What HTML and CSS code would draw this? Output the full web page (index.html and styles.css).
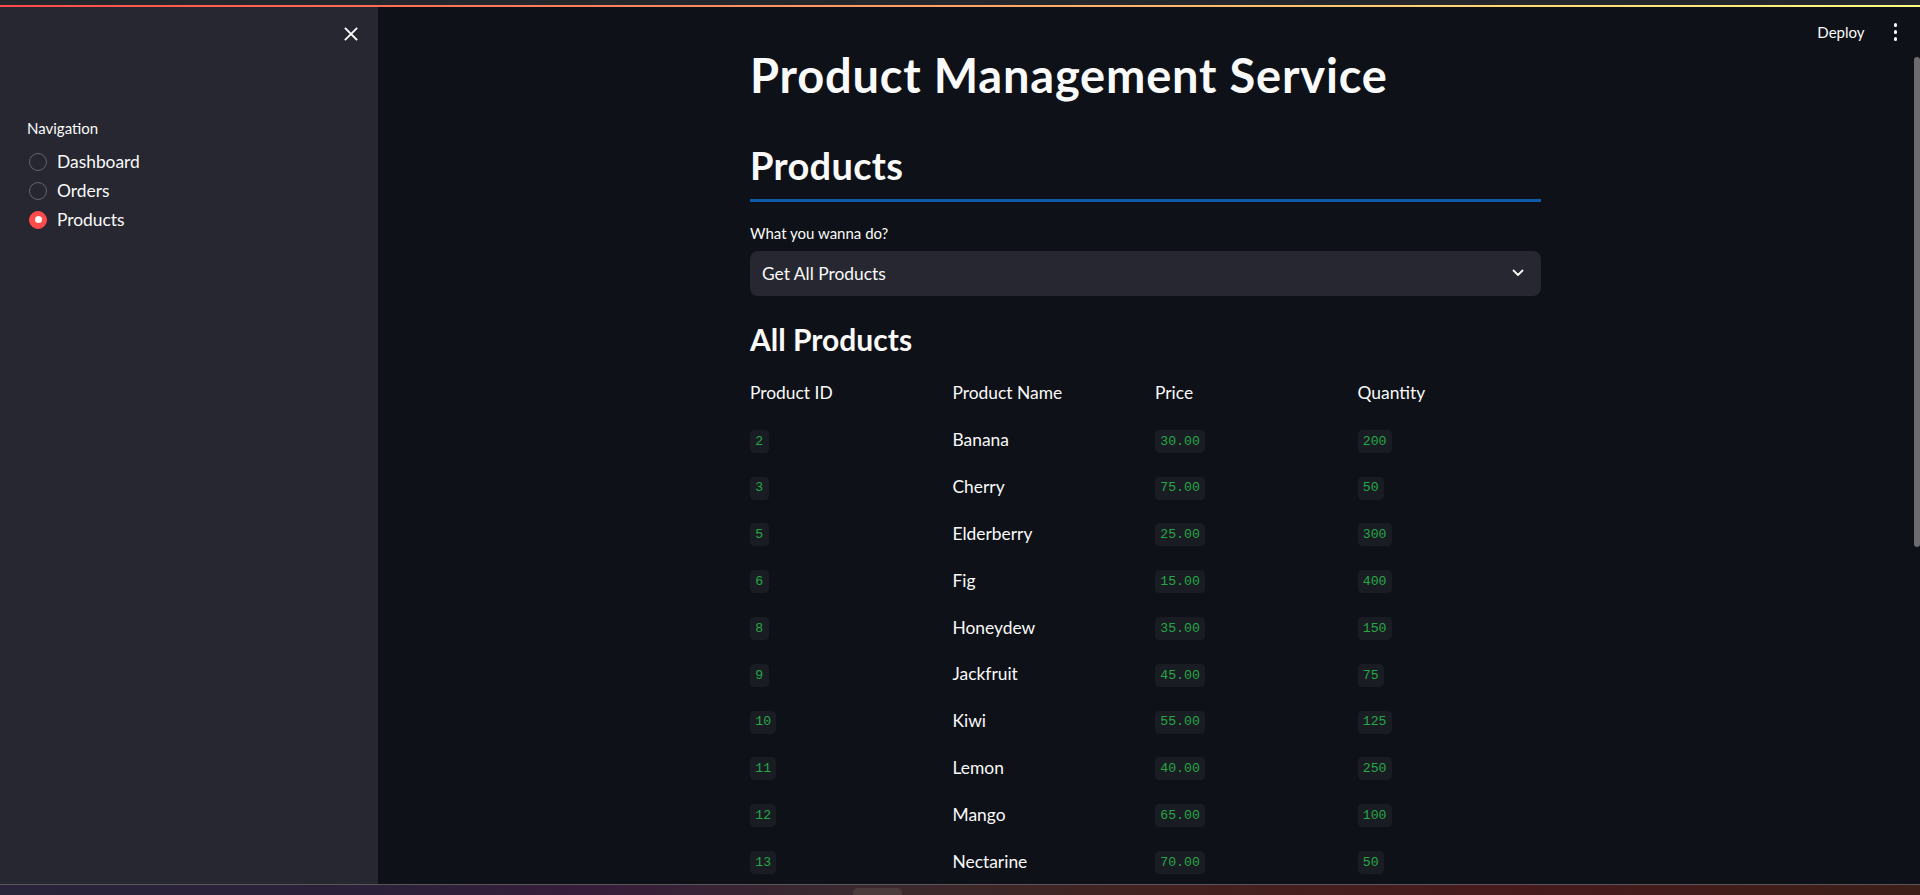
FILE: index.html
```html
<!DOCTYPE html>
<html lang="en">
<head>
<meta charset="utf-8">
<title>Product Management Service</title>
<link rel="stylesheet" href="styles.css">
</head>
<body>
<div class="topstrip"></div>
<div class="decoration"></div>
<div class="app">
  <aside class="sidebar">
    <div class="sidebar-head">
      <button class="close-btn" aria-label="Close sidebar">
        <svg width="14" height="14" viewBox="0 0 14 14"><path d="M1.5 1.5 L12.5 12.5 M12.5 1.5 L1.5 12.5" stroke="#fafafa" stroke-width="1.8" stroke-linecap="square" fill="none"/></svg>
      </button>
    </div>
    <div class="nav-label">Navigation</div>
    <div class="radio-group">
      <div class="radio-row"><span class="radio"></span><span class="radio-text">Dashboard</span></div>
      <div class="radio-row"><span class="radio"></span><span class="radio-text">Orders</span></div>
      <div class="radio-row"><span class="radio checked"></span><span class="radio-text">Products</span></div>
    </div>
  </aside>
  <main class="main">
    <div class="toolbar">
      <span class="deploy">Deploy</span>
      <span class="kebab"><i></i><i></i><i></i></span>
    </div>
    <div class="scroll-thumb"></div>
    <div class="content">
      <h1 class="title">Product Management Service</h1>
      <h2 class="subtitle">Products</h2>
      <div class="divider"></div>
      <div class="field-label">What you wanna do?</div>
      <div class="select">
        <span class="select-value">Get All Products</span>
        <svg class="chevron" width="12" height="8" viewBox="0 0 12 8"><path d="M1.5 1.5 L6 6 L10.5 1.5" stroke="#fafafa" stroke-width="1.8" fill="none" stroke-linecap="round" stroke-linejoin="round"/></svg>
      </div>
      <h3 class="section">All Products</h3>
      <div class="grid head">
        <div>Product ID</div><div>Product Name</div><div>Price</div><div>Quantity</div>
      </div>
      <div class="grid row"><div><code>2</code></div><div>Banana</div><div><code>30.00</code></div><div><code>200</code></div></div>
      <div class="grid row"><div><code>3</code></div><div>Cherry</div><div><code>75.00</code></div><div><code>50</code></div></div>
      <div class="grid row"><div><code>5</code></div><div>Elderberry</div><div><code>25.00</code></div><div><code>300</code></div></div>
      <div class="grid row"><div><code>6</code></div><div>Fig</div><div><code>15.00</code></div><div><code>400</code></div></div>
      <div class="grid row"><div><code>8</code></div><div>Honeydew</div><div><code>35.00</code></div><div><code>150</code></div></div>
      <div class="grid row"><div><code>9</code></div><div>Jackfruit</div><div><code>45.00</code></div><div><code>75</code></div></div>
      <div class="grid row"><div><code>10</code></div><div>Kiwi</div><div><code>55.00</code></div><div><code>125</code></div></div>
      <div class="grid row"><div><code>11</code></div><div>Lemon</div><div><code>40.00</code></div><div><code>250</code></div></div>
      <div class="grid row"><div><code>12</code></div><div>Mango</div><div><code>65.00</code></div><div><code>100</code></div></div>
      <div class="grid row"><div><code>13</code></div><div>Nectarine</div><div><code>70.00</code></div><div><code>50</code></div></div>
    </div>
  </main>
</div>
<div class="taskbar"><span class="task-tab"></span></div>
</body>
</html>
```
FILE: styles.css
```css
* { box-sizing: border-box; }
html, body {
  margin: 0;
  padding: 0;
  width: 1920px;
  height: 895px;
  overflow: hidden;
  background: #0e1117;
  font-family: Lato, "Noto Sans", sans-serif;
  color: #fafafa;
}
body { display: flex; flex-direction: column; }

.topstrip { height: 5px; background: #23272b; flex: none; }
.decoration {
  height: 2px;
  flex: none;
  background: linear-gradient(90deg, #ff4b4b, #fffd80);
}
.app {
  height: 877px;
  flex: none;
  display: flex;
  overflow: hidden;
}

/* Sidebar */
.sidebar {
  width: 378px;
  flex: none;
  background: #262730;
  padding-left: 27px;
}
.sidebar-head {
  height: 54px;
  display: flex;
  justify-content: flex-end;
  align-items: center;
  padding-right: 20px;
}
.close-btn {
  width: 14px;
  height: 14px;
  padding: 0;
  border: 0;
  background: none;
  display: flex;
}
.nav-label {
  margin-top: 58px;
  font-size: 15px;
  line-height: 18px;
}
.radio-group {
  margin-top: 10px;
  display: flex;
  flex-direction: column;
}
.radio-row {
  height: 29px;
  display: flex;
  align-items: center;
  gap: 10px;
  padding-left: 2px;
}
.radio {
  width: 18px;
  height: 18px;
  border-radius: 50%;
  border: 1px solid #62636b;
  flex: none;
  display: flex;
  align-items: center;
  justify-content: center;
}
.radio.checked {
  background: #ff4b4b;
  border-color: #ff4b4b;
}
.radio.checked::after {
  content: "";
  width: 7px;
  height: 7px;
  border-radius: 50%;
  background: #fafafa;
}
.radio-text {
  font-size: 17.4px;
  line-height: 21px;
  margin-top: -1px;
}

/* Main */
.main {
  flex: 1;
  position: relative;
  overflow: hidden;
}
.toolbar {
  position: absolute;
  top: 0;
  right: 0;
  height: 50px;
  display: flex;
  align-items: center;
  padding-right: 23px;
  gap: 29px;
}
.deploy {
  font-size: 15px;
  line-height: 18px;
}
.kebab {
  display: flex;
  flex-direction: column;
  gap: 3.5px;
}
.kebab i {
  width: 3.5px;
  height: 3.5px;
  border-radius: 50%;
  background: #fafafa;
  display: block;
}
.scroll-thumb {
  position: absolute;
  right: 0;
  top: 50px;
  width: 6px;
  height: 490px;
  border-radius: 3px;
  background: #6c6c6e;
}
.content {
  padding-left: 372px;
  padding-top: 39.6px;
  width: 1163px;
}
.title {
  margin: 0;
  font-size: 47px;
  line-height: 56.4px;
  font-weight: 700;
  letter-spacing: 0.8px;
  white-space: nowrap;
}
.subtitle {
  margin: 39.5px 0 0;
  font-size: 38px;
  line-height: 45.6px;
  font-weight: 700;
  letter-spacing: 0.3px;
}
.divider {
  margin-top: 10.9px;
  height: 3px;
  background: #0c5aa8;
}
.field-label {
  margin-top: 22px;
  font-size: 15px;
  line-height: 18px;
}
.select {
  margin-top: 9px;
  height: 45px;
  background: #262730;
  border-radius: 8px;
  display: flex;
  align-items: center;
  justify-content: space-between;
  padding: 0 17px 0 12px;
}
.select-value {
  font-size: 17.4px;
  line-height: 21px;
}
.section {
  margin: 25.4px 0 0;
  font-size: 30px;
  line-height: 36px;
  font-weight: 700;
}
.grid {
  display: grid;
  grid-template-columns: repeat(4, 183.5px);
  column-gap: 19px;
  align-items: center;
  font-size: 17.4px;
  line-height: 21px;
}
.grid.head {
  margin-top: 11.6px;
  height: 47px;
  margin-bottom: 2px;
}
.grid.row { height: 46.8px; }
code {
  display: inline-block;
  font-family: "Liberation Mono", "DejaVu Sans Mono", monospace;
  font-size: 13.2px;
  line-height: 17.6px;
  padding: 2.7px 5.3px;
  background: #1a1c24;
  color: #25a844;
  border-radius: 4.4px;
  vertical-align: middle;
}
.grid.row > div { display: flex; align-items: center; }
.grid.row > div:nth-child(2) { margin-top: -3px; }

/* Taskbar */
.taskbar {
  flex: 1;
  border-top: 1px solid #5d555c;
  background: linear-gradient(90deg, #28243a 0%, #2b2138 20%, #361d3a 30%, #3a2a2e 45%, #43211f 62%, #471a1b 78%, #3c1f19 100%);
  position: relative;
}
.task-tab {
  position: absolute;
  left: 853px;
  top: 3px;
  width: 49px;
  height: 10px;
  border-radius: 5px 5px 0 0;
  background: #4b3b3d;
}
```
